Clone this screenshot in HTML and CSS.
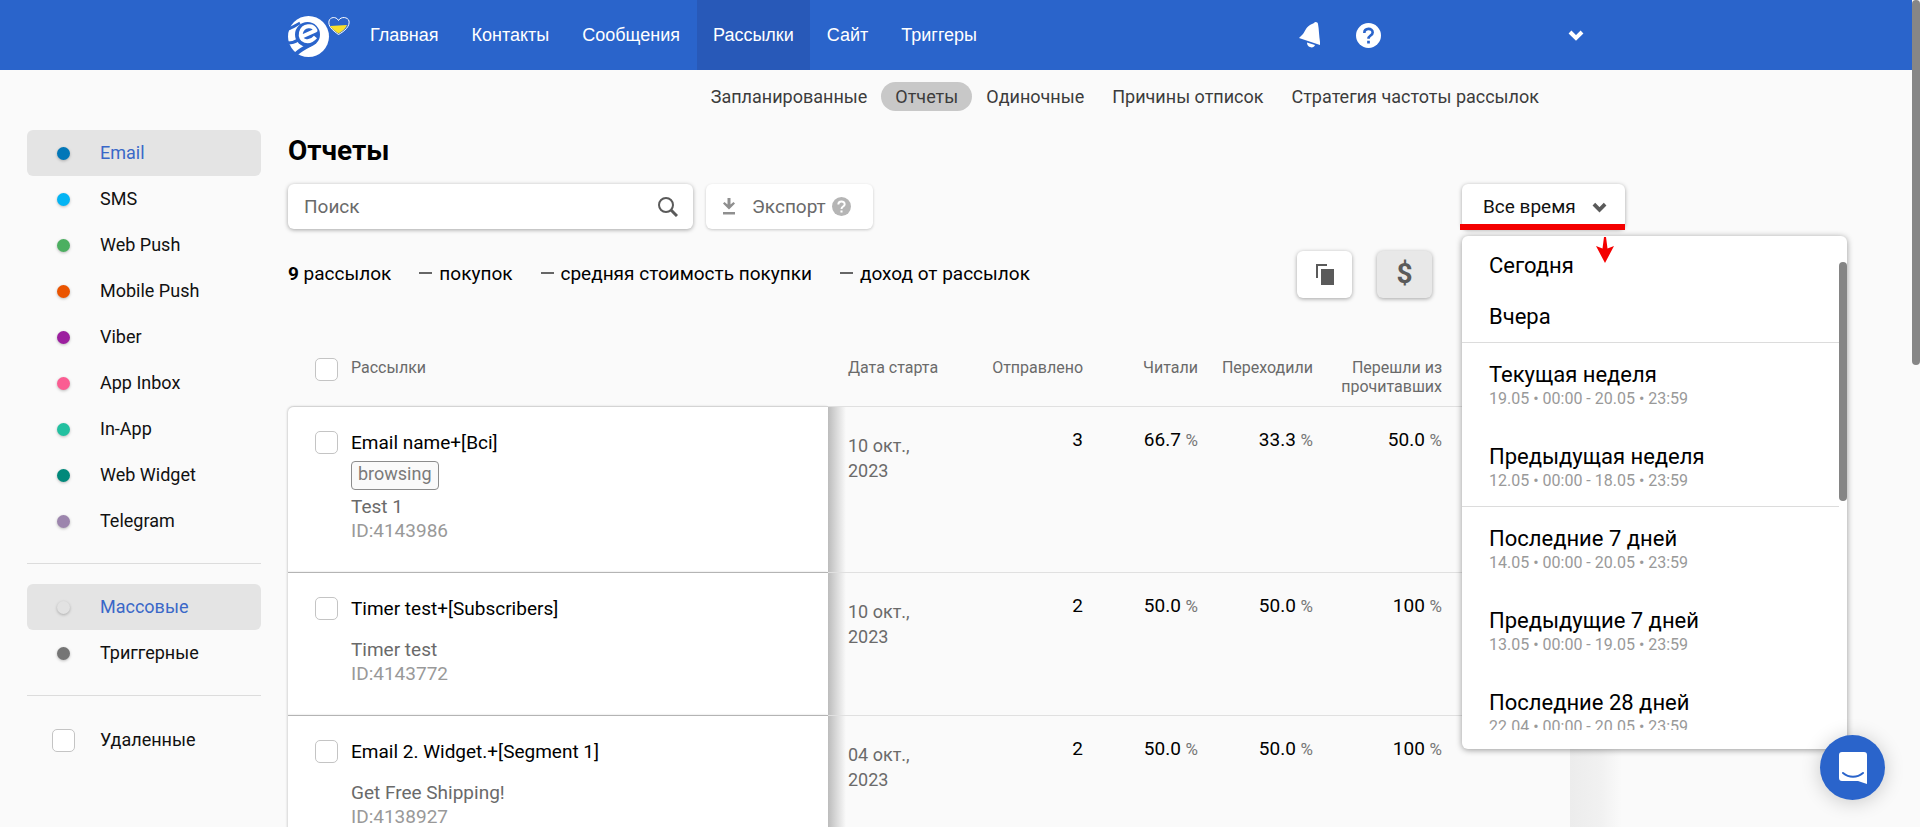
FILE: index.html
```html
<!DOCTYPE html>
<html lang="ru">

<head>
    <meta charset="UTF-8" />
    <meta name="viewport" content="width=device-width, initial-scale=1.0" />
    <title>Отчеты</title>
    <link rel="stylesheet" href="styles.css">
</head>

<body>
    <header class="topbar">
        <a class="logo" href="#" aria-label="На главную">
            <svg width="62" height="50" viewBox="0 0 62 50">
                <circle cx="20.500" cy="26.500" r="20.500" fill="#fff" />
                <circle cx="19.500" cy="24.500" r="12.500" fill="#2a64cb" />
                <g fill="none" stroke="#2a64cb" stroke-width="3">
                    <path d="M0 19c4-1 8-4 12-6" />
                    <path d="M0 33c4 0 7-1 10-3" />
                    <path d="M6 46c5-6 11-8 17-12" stroke-width="4" />
                </g>
                <path d="M13 27l14.500-6.500C25 14 15 15 13 22.500c-2 9 8 12 14.500 4.500" fill="none" stroke="#fff" stroke-width="4" stroke-linejoin="round" />
                <path d="M50.500 24.500C44 20 40 16 41 11c1-4 7-5 9.500-.5C53 6 60 7 61 11c1 5-4 10-10.500 13.500z" fill="#2a64cb" stroke="#fff" />
                <path d="M42 16l17-1c-1 3-4 6-8.500 8.500C47 21 44 19 42 16z" fill="#f8e02c" />
            </svg>
        </a>
        <nav class="main-nav">
            <a href="#">Главная</a>
            <a href="#">Контакты</a>
            <a href="#">Сообщения</a>
            <a href="#" class="active">Рассылки</a>
            <a href="#">Сайт</a>
            <a href="#">Триггеры</a>
        </nav>
        <div class="user-tools">
            <button type="button" aria-label="Уведомления">
                <svg width="22" height="28" viewBox="0 0 22 28" fill="#fff">
                    <path d="M15 2c1-2 4-1 4 1 1 5 1 12 2 18v3L0 17l2-2c4-3 4-8 9-11 1-1 3-1 4-2z" />
                    <path d="M8 21.500l8 2.500c-1 4-8 3-8-2.500z" />
                </svg>
            </button>
            <button type="button" aria-label="Помощь">
                <svg width="25" height="25" viewBox="0 0 24 24">
                    <circle cx="12" cy="12" r="12" fill="#fff" />
                    <path d="M8 9.500c0-5 8-5 8-.5 0 3-4 3-4 6" fill="none" stroke="#2a64cb" stroke-width="2.500" />
                    <path d="M10.700 17h2.600v2.600h-2.600z" fill="#2a64cb" />
                </svg>
            </button>
            <button type="button" class="account" aria-label="Аккаунт">
                <svg width="16" height="12" viewBox="0 0 16 12">
                    <path d="M2 3l6 6 6-6" fill="none" stroke="#fff" stroke-width="4" />
                </svg>
            </button>
        </div>
    </header>

    <div class="layout">
        <aside class="sidebar">
            <ul>
                <li><a href="#" class="active"><span class="dot email"></span>Email</a></li>
                <li><a href="#"><span class="dot sms"></span>SMS</a></li>
                <li><a href="#"><span class="dot web-push"></span>Web Push</a></li>
                <li><a href="#"><span class="dot mobile-push"></span>Mobile Push</a></li>
                <li><a href="#"><span class="dot viber"></span>Viber</a></li>
                <li><a href="#"><span class="dot app-inbox"></span>App Inbox</a></li>
                <li><a href="#"><span class="dot in-app"></span>In-App</a></li>
                <li><a href="#"><span class="dot web-widget"></span>Web Widget</a></li>
                <li><a href="#"><span class="dot telegram"></span>Telegram</a></li>
            </ul>
            <ul>
                <li><a href="#" class="active"><span class="dot mass"></span>Массовые</a></li>
                <li><a href="#"><span class="dot trigger"></span>Триггерные</a></li>
            </ul>
            <label class="deleted"><input type="checkbox" />Удаленные</label>
        </aside>

        <main class="content">
            <nav class="sub-nav">
                <a href="#">Запланированные</a>
                <a href="#" class="active">Отчеты</a>
                <a href="#">Одиночные</a>
                <a href="#">Причины отписок</a>
                <a href="#">Стратегия частоты рассылок</a>
            </nav>

            <h1>Отчеты</h1>

            <div class="filters">
                <div class="search">
                    <input type="text" placeholder="Поиск" aria-label="Поиск" />
                    <svg width="20" height="20" viewBox="0 0 20 20" fill="none" stroke="#5a5a5a">
                        <circle cx="8" cy="8" r="7" stroke-width="2" />
                        <path d="M13 13l6 6" stroke-width="3" />
                    </svg>
                </div>
                <button type="button" class="export">
                    <svg width="14" height="17" viewBox="0 0 14 17" fill="#8f8f8f">
                        <path d="M5.500 0h3v6.500L11.500 4 13 5.500l-6 6-6-6L2.500 4l3 2.500zM1 14h12v2.500H1z" />
                    </svg>
                    Экспорт
                    <svg class="hint" width="19" height="19" viewBox="0 0 24 24">
                        <circle cx="12" cy="12" r="12" fill="#b5b5b5" />
                        <path d="M8 9.500c0-5 8-5 8-.5 0 3-4 3-4 6" fill="none" stroke="#fff" stroke-width="2.500" />
                        <path d="M10.700 17h2.600v2.600h-2.600z" fill="#fff" />
                    </svg>
                </button>
                <div class="period">
                    <button type="button" class="period-button" aria-expanded="true">
                        Все время
                        <svg width="15" height="12" viewBox="0 0 16 12">
                            <path d="M2 3l6 6 6-6" fill="none" stroke="#5a5a5a" stroke-width="4" />
                        </svg>
                    </button>
                    <div class="period-menu">
                        <svg class="arrow" width="18" height="26" viewBox="0 0 18 26" fill="#f40000">
                            <path d="M8 0h2l1.500 11.500L18 9 9 26 0 9l6.500 2.500z" />
                        </svg>
                        <ul class="period-list">
                            <li><a href="#">Сегодня</a></li>
                            <li><a href="#">Вчера</a></li>
                            <li class="group"><a href="#">Текущая неделя<small>19.05 • 00:00 - 20.05 • 23:59</small></a></li>
                            <li><a href="#">Предыдущая неделя<small>12.05 • 00:00 - 18.05 • 23:59</small></a></li>
                            <li class="group"><a href="#">Последние 7 дней<small>14.05 • 00:00 - 20.05 • 23:59</small></a></li>
                            <li><a href="#">Предыдущие 7 дней<small>13.05 • 00:00 - 19.05 • 23:59</small></a></li>
                            <li><a href="#">Последние 28 дней<small>22.04 • 00:00 - 20.05 • 23:59</small></a></li>
                        </ul>
                        <span class="menu-thumb"></span>
                    </div>
                </div>
            </div>

            <div class="summary">
                <span><b>9</b> рассылок</span>
                <span><i class="dash"></i>покупок</span>
                <span><i class="dash"></i>средняя стоимость покупки</span>
                <span><i class="dash"></i>доход от рассылок</span>
                <div class="summary-buttons">
                    <button type="button" aria-label="Копировать">
                        <svg width="18" height="21" viewBox="0 0 18 21" fill="#5a5a5a">
                            <path d="M0 0h11v2H2v12H0zM5 5h13v16H5z" />
                        </svg>
                    </button>
                    <button type="button" class="pressed">$</button>
                </div>
            </div>

            <div class="table-wrap">
                <table class="reports">
                    <colgroup>
                        <col>
                        <col class="col-date">
                        <col class="col-sent">
                        <col class="col-rate">
                        <col class="col-rate">
                        <col class="col-sent">
                        <col class="col-rate">
                    </colgroup>
                    <thead>
                        <tr>
                            <th>
                                <label class="name-head"><input type="checkbox" />Рассылки</label>
                            </th>
                            <th class="date">Дата старта</th>
                            <th>Отправлено</th>
                            <th>Читали</th>
                            <th>Переходили</th>
                            <th>Перешли из прочитавших</th>
                            <th></th>
                        </tr>
                    </thead>
                    <tbody>
                        <tr>
                            <td class="name">
                                <input type="checkbox" id="r1" />
                                <div>
                                    <label for="r1">Email name+[Bci]</label>
                                    <span class="tag">browsing</span>
                                    <p>Test 1</p>
                                    <p class="id">ID:4143986</p>
                                </div>
                            </td>
                            <td class="date">10 окт.,<br>2023</td>
                            <td>3</td>
                            <td>66.7 <small>%</small></td>
                            <td>33.3 <small>%</small></td>
                            <td>50.0 <small>%</small></td>
                            <td><i class="dash"></i></td>
                        </tr>
                        <tr>
                            <td class="name">
                                <input type="checkbox" id="r2" />
                                <div>
                                    <label for="r2">Timer test+[Subscribers]</label>
                                    <p class="subject">Timer test</p>
                                    <p class="id">ID:4143772</p>
                                </div>
                            </td>
                            <td class="date">10 окт.,<br>2023</td>
                            <td>2</td>
                            <td>50.0 <small>%</small></td>
                            <td>50.0 <small>%</small></td>
                            <td>100 <small>%</small></td>
                            <td><i class="dash"></i></td>
                        </tr>
                        <tr>
                            <td class="name">
                                <input type="checkbox" id="r3" />
                                <div>
                                    <label for="r3">Email 2. Widget.+[Segment 1]</label>
                                    <p class="subject">Get Free Shipping!</p>
                                    <p class="id">ID:4138927</p>
                                </div>
                            </td>
                            <td class="date">04 окт.,<br>2023</td>
                            <td>2</td>
                            <td>50.0 <small>%</small></td>
                            <td>50.0 <small>%</small></td>
                            <td>100 <small>%</small></td>
                            <td><i class="dash"></i></td>
                        </tr>
                    </tbody>
                </table>
            </div>
        </main>
    </div>

    <button type="button" class="chat" aria-label="Чат">
        <svg width="30" height="34" viewBox="0 0 30 34">
            <path d="M4 1h22a3 3 0 0 1 3 3v29l-9-3H4a3 3 0 0 1-3-3V4a3 3 0 0 1 3-3z" fill="#fff" />
            <path d="M5 22c6 5 14 5 20 0" fill="none" stroke="#2a64cb" stroke-width="2" stroke-linecap="round" />
        </svg>
    </button>
    <span class="page-thumb"></span>
</body>

</html>
```
FILE: styles.css
```css
* {
    box-sizing: border-box;
}

body {
    margin: 0;
    padding-right: 8px;
    height: 100vh;
    overflow: hidden;
    background: #fafafa;
    color: #111;
    font-family: Roboto, Arial, sans-serif;
    font-size: 18px;
    line-height: 24px;
}

a {
    color: inherit;
    text-decoration: none;
}

button {
    font: inherit;
    color: inherit;
    border: 0;
    padding: 0;
    background: none;
    cursor: pointer;
}

ul {
    margin: 0;
    padding: 0;
    list-style: none;
}

p {
    margin: 0;
}

svg {
    display: block;
    flex: none;
}

input[type="checkbox"] {
    appearance: none;
    flex: none;
    width: 23px;
    height: 23px;
    margin: 0;
    border: 1px solid #c4c4c4;
    border-radius: 5px;
    background: #fff;
}

/* header */
.topbar {
    display: flex;
    align-items: center;
    height: 70px;
    padding: 0 328px 0 288px;
    background: #2a64cb;
    color: #fff;
}

.logo {
    margin-right: 4px;
}

.main-nav {
    display: flex;
    gap: 1px;
    align-self: stretch;
    font-family: "Liberation Sans", Arial, sans-serif;
}

.main-nav a {
    display: flex;
    align-items: center;
    padding: 0 16px;
}

.main-nav a.active {
    background: #2859b8;
}

.user-tools {
    display: flex;
    align-items: center;
    gap: 35px;
    margin-left: auto;
}

.account {
    display: flex;
    justify-content: flex-end;
    width: 168px;
}

/* columns */
.layout {
    display: flex;
    gap: 27px;
    padding: 0 342px 0 27px;
}

.sidebar {
    flex: none;
    width: 234px;
    padding-top: 60px;
}

.sidebar ul {
    padding-bottom: 19px;
    margin-bottom: 20px;
    border-bottom: 1px solid #dcdcdc;
}

.sidebar li a {
    display: flex;
    align-items: center;
    height: 46px;
    padding-left: 30px;
    border-radius: 6px;
}

.sidebar li a.active {
    background: #e4e4e4;
    color: #3a68c8;
}

.dot {
    width: 13px;
    height: 13px;
    margin-right: 30px;
    border-radius: 50%;
    box-shadow: 0 1px 3px rgba(0, 0, 0, 0.25);
}

.email { background: #0277b8; }
.sms { background: #03b4f4; }
.web-push { background: #4caf61; }
.mobile-push { background: #ea5400; }
.viber { background: #9c1f9f; }
.app-inbox { background: #fa5d92; }
.in-app { background: #22c0a0; }
.web-widget { background: #01897b; }
.telegram { background: #9c85ad; }
.mass { background: #e2e2e2; }
.trigger { background: #757575; }

.deleted {
    display: flex;
    align-items: center;
    gap: 25px;
    padding: 12px 0 0 25px;
}

.content {
    flex: 1;
    min-width: 0;
}

.sub-nav {
    display: flex;
    justify-content: flex-end;
    padding: 12px 17px 0 0;
    color: #3c3c3c;
}

.sub-nav a {
    padding: 0 14px;
    border-radius: 15px;
    line-height: 29px;
}

.sub-nav a.active {
    background: #c8c8c8;
}

h1 {
    margin: 23px 0 16px;
    font-size: 28px;
    line-height: 34px;
    color: #000;
}

/* filters */
.filters {
    display: flex;
    gap: 13px;
    font-size: 19px;
}

.search,
.export,
.period-button,
.summary-buttons button {
    display: flex;
    align-items: center;
    height: 45px;
    border-radius: 6px;
    background: #fff;
    box-shadow: 0 1px 4px rgba(0, 0, 0, 0.35);
}

.search {
    width: 405px;
    padding: 0 15px 0 16px;
}

.search input {
    flex: 1;
    min-width: 0;
    border: 0;
    padding: 0;
    background: none;
    outline: 0;
    font: inherit;
}

.search input::placeholder {
    color: #6a6a6a;
    opacity: 1;
}

.export {
    gap: 6px;
    padding: 0 22px 0 16px;
    color: #6a6a6a;
    box-shadow: 0 1px 3px rgba(0, 0, 0, 0.2);
}

.export svg:first-child {
    margin-right: 10px;
}

.period {
    position: relative;
    margin: 0 -55px 0 auto;
}

.period-button {
    gap: 16px;
    width: 163px;
    padding: 0 17px 0 21px;
}

/* red mark on the lower edge of the button */
.period::after {
    content: "";
    position: absolute;
    top: 40px;
    right: 0;
    left: -2px;
    height: 6px;
    background: #f40000;
}

/* opened list of periods, lies over the table */
.period-menu {
    position: absolute;
    top: 52px;
    left: 0;
    z-index: 2;
    width: 385px;
    padding-bottom: 19px;
    border-radius: 6px;
    background: #fff;
    box-shadow: 0 1px 6px rgba(0, 0, 0, 0.4);
}

.arrow {
    position: absolute;
    top: 1px;
    left: 134px;
}

.period-list {
    height: 494px;
    margin-right: 8px;
    padding-top: 4px;
    overflow: hidden;
    color: #000;
    font-size: 22px;
    line-height: 26px;
}

.period-list a {
    display: block;
    padding: 13px 27px 12px;
}

.period-list small {
    display: block;
    padding-bottom: 2px;
    color: #999;
    font-size: 16px;
    line-height: 22px;
}

.period-list .group {
    padding-top: 6px;
    border-top: 1px solid #dcdcdc;
}

.period-list .group ~ li:not(.group) {
    margin-top: 7px;
}

.menu-thumb {
    position: absolute;
    top: 26px;
    right: 0;
    width: 8px;
    height: 239px;
    border-radius: 4px;
    background: #858585;
}

/* totals */
.summary {
    display: flex;
    align-items: center;
    gap: 28px;
    height: 50px;
    margin-top: 20px;
    color: #000;
    font-size: 19px;
}

.dash {
    display: inline-block;
    width: 13px;
    height: 2px;
    background: #666;
    vertical-align: 6px;
}

.summary .dash {
    margin-right: 7px;
}

.summary-buttons {
    display: flex;
    gap: 25px;
    margin: 0 138px 0 auto;
}

.summary-buttons button {
    justify-content: center;
    width: 55px;
    height: 47px;
}

.summary-buttons .pressed {
    background: #e8e8e8;
    color: #5a5a5a;
    font-size: 28px;
    font-weight: bold;
}

/* table */
.table-wrap {
    position: relative;
}

.table-wrap::after {
    content: "";
    position: absolute;
    top: 107px;
    bottom: 0;
    left: 100%;
    width: 52px;
    background: linear-gradient(to right, #ececec, #f1f1f1 60%, #fafafa);
}

.reports {
    width: 100%;
    table-layout: fixed;
    border-collapse: separate;
    border-spacing: 0;
}

.col-date {
    width: 139px;
}

.col-sent {
    width: 129px;
}

.col-rate {
    width: 115px;
}

.reports th {
    height: 107px;
    padding: 59px 13px 0 0;
    color: #6a6a6a;
    font-size: 16px;
    font-weight: normal;
    line-height: 19px;
    text-align: right;
    vertical-align: top;
}

.name-head {
    display: flex;
    align-items: flex-start;
    gap: 13px;
    padding-left: 27px;
}

.reports td {
    padding: 21px 13px 0 0;
    border-top: 1px solid #e0e0e0;
    color: #000;
    font-size: 19px;
    text-align: right;
    vertical-align: top;
}

.reports small {
    color: #777;
    font-size: 17px;
}

.reports .date {
    padding-left: 20px;
    text-align: left;
}

.reports td.date {
    padding-top: 26px;
    background: linear-gradient(to right, #bcbcbc, #fafafa) no-repeat 0 0 / 18px 100%;
    color: #6a6a6a;
    font-size: 18px;
    line-height: 25px;
}

.reports td.name {
    display: flex;
    gap: 13px;
    padding: 24px 0 29px 27px;
    border-color: #b4b4b4;
    background: #fff;
    box-shadow: -1px 0 2px rgba(0, 0, 0, 0.15);
    color: #6a6a6a;
    text-align: left;
}

.reports tr:first-child td.name {
    border-color: #d4d4d4;
    border-top-left-radius: 6px;
}

.name label {
    display: block;
    color: #000;
}

.name .tag {
    display: block;
    width: max-content;
    height: 29px;
    margin: 6px 0 5px;
    padding: 0 6px;
    border: 1px solid #8c8c8c;
    border-radius: 4px;
    background: #fafafa;
    color: #7a7a7a;
    font-size: 18px;
}

.name .subject {
    margin-top: 17px;
}

.name .id {
    color: #999;
}

/* floating parts */
.chat {
    position: fixed;
    right: 35px;
    bottom: 27px;
    z-index: 3;
    display: flex;
    align-items: center;
    justify-content: center;
    width: 65px;
    height: 65px;
    border-radius: 50%;
    background: #2a64cb;
    box-shadow: 0 2px 20px rgba(0, 0, 0, 0.2);
}

.page-thumb {
    position: fixed;
    top: 0;
    right: 0;
    width: 8px;
    height: 365px;
    border-radius: 4px;
    background: #868686;
}
```
